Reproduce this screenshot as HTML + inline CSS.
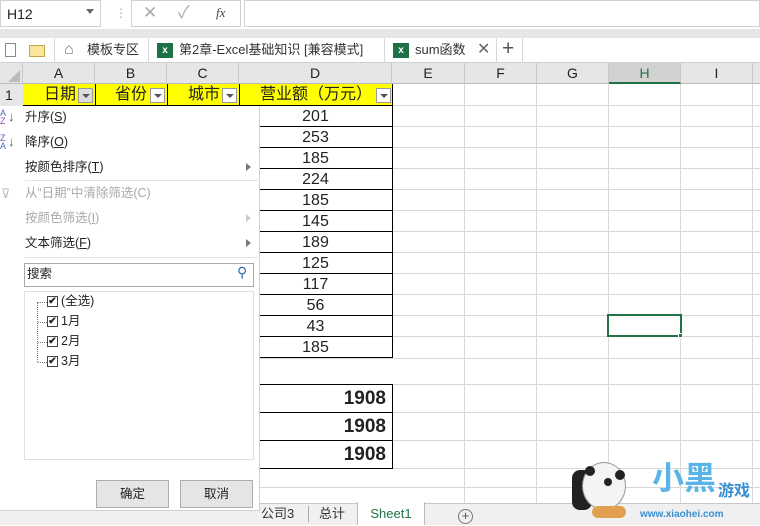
<!DOCTYPE html>
<html><head><meta charset="utf-8"><style>
*{box-sizing:border-box;margin:0;padding:0}
body{width:760px;height:525px;overflow:hidden;background:#fff;font-family:"Liberation Sans","Noto Sans CJK SC",sans-serif;font-size:13px;color:#222;position:relative;line-height:1.2}
.a{position:absolute}
.vl{position:absolute;width:1px;background:#d8d8d8}
.hl{position:absolute;height:1px;background:#d8d8d8}
.ch{position:absolute;top:63px;height:21px;text-align:center;font-size:14px;line-height:21px;border-right:1px solid #c8c8c8}
.num{position:absolute;left:239px;width:154px;height:21px;text-align:center;font-size:16px;line-height:21px;border-right:1px solid #000;border-bottom:1px solid #000}
.big{position:absolute;left:239px;width:154px;height:28px;text-align:right;padding-right:6px;font-size:19px;font-weight:bold;line-height:28px;border-right:1px solid #000;border-bottom:1px solid #000}
.dd{position:absolute;top:88px;width:15px;height:15px;background:#fff;border:1px solid #999}
.dd:after{content:"";position:absolute;left:3px;top:5px;border:4px solid transparent;border-top:4px solid #555}
.mi{position:absolute;left:25px;font-size:12.5px}
.arr{position:absolute;left:246px;border:4px solid transparent;border-left:5px solid #777}
.cb{position:absolute;left:47px;width:11px;height:11px;border:1px solid #444;font-size:10px;line-height:9px;text-align:center;font-weight:bold}
.hd{position:absolute;top:84px;height:22px;line-height:22px;font-size:16px}
</style></head><body>
<div class="a" style="left:0;top:0;width:760px;height:30px;background:#fff"></div>
<div class="a" style="left:0;top:0;width:101px;height:27px;border:1px solid #d0d0d0;font-size:14px;padding:5px 6px">H12</div>
<div class="a" style="left:86px;top:9px;border:4px solid transparent;border-top:5px solid #666"></div>
<div class="a" style="left:115px;top:6px;color:#aaa;font-size:12px">⋮</div>
<div class="a" style="left:131px;top:0;width:110px;height:27px;border:1px solid #d0d0d0"></div>
<div class="a" style="left:143px;top:3px;color:#aaa;font-size:17px">✕</div>
<div class="a" style="left:178px;top:3px;color:#aaa;font-size:17px">✓</div>
<div class="a" style="left:216px;top:5px;color:#444;font-size:13px;font-style:italic;font-family:'Liberation Serif',serif">fx</div>
<div class="a" style="left:244px;top:0;width:516px;height:27px;border:1px solid #d0d0d0"></div>
<div class="a" style="left:0;top:29px;width:760px;height:9px;background:#e6e6e6"></div>
<div class="a" style="left:0;top:38px;width:760px;height:25px;background:#fff;border-bottom:1px solid #d0d0d0"></div>
<div class="a" style="left:5px;top:43px;width:11px;height:14px;border:1px solid #888"></div>
<div class="a" style="left:29px;top:45px;width:16px;height:12px;border:1px solid #c9a54a;background:#fbe59a"></div>
<div class="vl" style="left:54px;top:38px;height:25px"></div>
<div class="a" style="left:64px;top:40px;font-size:16px;color:#777">⌂</div>
<div class="a" style="left:87px;top:42px;color:#333">模板专区</div>
<div class="vl" style="left:148px;top:38px;height:25px"></div>
<div class="a" style="left:157px;top:43px;width:16px;height:15px;background:#1e7145;color:#fff;font-size:10px;font-weight:bold;text-align:center;line-height:15px">x</div>
<div class="a" style="left:179px;top:42px;color:#333">第2章-Excel基础知识 [兼容模式]</div>
<div class="vl" style="left:384px;top:38px;height:25px"></div>
<div class="a" style="left:393px;top:43px;width:16px;height:15px;background:#1e7145;color:#fff;font-size:10px;font-weight:bold;text-align:center;line-height:15px">x</div>
<div class="a" style="left:415px;top:42px;color:#333">sum函数</div>
<div class="a" style="left:477px;top:40px;font-size:16px;color:#666">✕</div>
<div class="vl" style="left:496px;top:38px;height:25px"></div>
<div class="a" style="left:502px;top:36px;font-size:21px;color:#555">+</div>
<div class="vl" style="left:522px;top:38px;height:25px"></div>
<div class="a" style="left:0;top:63px;width:760px;height:21px;background:#e6e6e6;border-bottom:1px solid #bbb"></div>
<div class="a" style="left:8px;top:70px;border:6px solid transparent;border-right-color:#bbb;border-bottom-color:#bbb"></div>
<div class="ch" style="left:0;width:23px"></div>
<div class="ch" style="left:23px;width:72px">A</div>
<div class="ch" style="left:95px;width:72px">B</div>
<div class="ch" style="left:167px;width:72px">C</div>
<div class="ch" style="left:239px;width:153px">D</div>
<div class="ch" style="left:392px;width:73px">E</div>
<div class="ch" style="left:465px;width:72px">F</div>
<div class="ch" style="left:537px;width:72px">G</div>
<div class="ch" style="left:609px;width:72px;background:#d2d2d2;border-bottom:2px solid #217346;color:#217346">H</div>
<div class="ch" style="left:681px;width:72px">I</div>
<div class="vl" style="left:464px;top:84px;height:420px"></div>
<div class="vl" style="left:536px;top:84px;height:420px"></div>
<div class="vl" style="left:608px;top:84px;height:420px"></div>
<div class="vl" style="left:680px;top:84px;height:420px"></div>
<div class="vl" style="left:752px;top:84px;height:420px"></div>
<div class="hl" style="left:239px;top:105px;width:521px"></div>
<div class="hl" style="left:239px;top:126px;width:521px"></div>
<div class="hl" style="left:239px;top:147px;width:521px"></div>
<div class="hl" style="left:239px;top:168px;width:521px"></div>
<div class="hl" style="left:239px;top:189px;width:521px"></div>
<div class="hl" style="left:239px;top:210px;width:521px"></div>
<div class="hl" style="left:239px;top:231px;width:521px"></div>
<div class="hl" style="left:239px;top:252px;width:521px"></div>
<div class="hl" style="left:239px;top:273px;width:521px"></div>
<div class="hl" style="left:239px;top:294px;width:521px"></div>
<div class="hl" style="left:239px;top:315px;width:521px"></div>
<div class="hl" style="left:239px;top:336px;width:521px"></div>
<div class="hl" style="left:239px;top:358px;width:521px"></div>
<div class="hl" style="left:239px;top:384px;width:521px"></div>
<div class="hl" style="left:239px;top:412px;width:521px"></div>
<div class="hl" style="left:239px;top:440px;width:521px"></div>
<div class="hl" style="left:239px;top:468px;width:521px"></div>
<div class="hl" style="left:239px;top:487px;width:521px"></div>
<div class="a" style="left:0;top:84px;width:23px;height:22px;background:#e6e6e6;font-size:14px;line-height:22px;padding-left:5px">1</div>
<div class="a" style="left:23px;top:84px;width:370px;height:22px;background:#ffff00;border-bottom:1px solid #000;border-right:1px solid #000"></div>
<div class="vl" style="left:95px;top:84px;height:22px;background:#000"></div>
<div class="vl" style="left:167px;top:84px;height:22px;background:#000"></div>
<div class="vl" style="left:239px;top:84px;height:22px;background:#000"></div>
<div class="hd" style="left:44px">日期</div>
<div class="dd" style="left:78px;background:#ddd"></div>
<div class="hd" style="left:115px">省份</div>
<div class="dd" style="left:150px"></div>
<div class="hd" style="left:188px">城市</div>
<div class="dd" style="left:222px"></div>
<div class="hd" style="left:260px">营业额（万元）</div>
<div class="dd" style="left:376px"></div>
<div class="num" style="top:106px">201</div>
<div class="num" style="top:127px">253</div>
<div class="num" style="top:148px">185</div>
<div class="num" style="top:169px">224</div>
<div class="num" style="top:190px">185</div>
<div class="num" style="top:211px">145</div>
<div class="num" style="top:232px">189</div>
<div class="num" style="top:253px">125</div>
<div class="num" style="top:274px">117</div>
<div class="num" style="top:295px">56</div>
<div class="num" style="top:316px">43</div>
<div class="num" style="top:337px">185</div>
<div class="a" style="left:239px;top:384px;width:154px;height:1px;background:#000"></div>
<div class="big" style="top:385px">1908</div>
<div class="big" style="top:413px">1908</div>
<div class="big" style="top:441px">1908</div>
<div class="a" style="left:607px;top:314px;width:75px;height:23px;border:2px solid #217346"></div>
<div class="a" style="left:678px;top:333px;width:5px;height:5px;background:#217346;border:1px solid #fff"></div>
<div class="a" style="left:0;top:503px;width:760px;height:22px;background:#f0f0f0;border-top:1px solid #c8c8c8"></div>
<div class="a" style="left:261px;top:506px;font-size:13px;color:#333">公司3</div>
<div class="vl" style="left:308px;top:506px;height:16px;background:#aaa"></div>
<div class="a" style="left:319px;top:506px;font-size:13px;color:#333">总计</div>
<div class="a" style="left:357px;top:502px;width:68px;height:23px;background:#fff;border-left:1px solid #bbb;border-right:1px solid #bbb;text-align:center;color:#217346;line-height:24px">Sheet1</div>
<div class="a" style="left:458px;top:509px;width:15px;height:15px;border:1px solid #777;border-radius:50%;text-align:center;line-height:12px;color:#555">+</div>
<div class="a" style="left:572px;top:470px;width:20px;height:40px;background:#222;border-radius:8px"></div>
<div class="a" style="left:582px;top:462px;width:44px;height:48px;background:#f4f4f4;border-radius:50%;border:1px solid #999"></div>
<div class="a" style="left:585px;top:466px;width:10px;height:10px;background:#222;border-radius:50%"></div>
<div class="a" style="left:615px;top:470px;width:10px;height:10px;background:#222;border-radius:50%"></div>
<div class="a" style="left:604px;top:478px;width:8px;height:8px;background:#222;border-radius:50%"></div>
<div class="a" style="left:592px;top:506px;width:34px;height:12px;background:#e0a050;border-radius:6px"></div>
<div class="a" style="left:652px;top:462px;font-size:32px;font-weight:bold;color:#5ab4e8;line-height:1">小黑</div>
<div class="a" style="left:718px;top:484px;font-size:16px;font-weight:bold;color:#3a8fd0;line-height:1">游戏</div>
<div class="a" style="left:640px;top:510px;font-size:10px;font-weight:bold;color:#3a8fd0;line-height:1">www.xiaohei.com</div>
<div class="a" style="left:0;top:106px;width:260px;height:405px;background:#fff;border-right:1px solid #d0d0d0;border-bottom:1px solid #d0d0d0"></div>
<div class="a" style="left:0;top:109px;font-size:9px;line-height:8px;color:#4a6fb5">A<br><span style="color:#8a4fb5">Z</span></div>
<div class="a" style="left:8px;top:109px;font-size:13px;color:#555">↓</div>
<div class="mi" style="top:110px">升序(<u>S</u>)</div>
<div class="a" style="left:0;top:134px;font-size:9px;line-height:8px;color:#8a4fb5">Z<br><span style="color:#4a6fb5">A</span></div>
<div class="a" style="left:8px;top:134px;font-size:13px;color:#555">↓</div>
<div class="mi" style="top:135px">降序(<u>O</u>)</div>
<div class="mi" style="top:160px">按颜色排序(<u>T</u>)</div>
<div class="arr" style="top:163px"></div>
<div class="hl" style="left:25px;top:180px;width:235px;background:#e4e4e4"></div>
<div class="a" style="left:1px;top:186px;font-size:13px;color:#bbb">⊽</div>
<div class="mi" style="top:186px;color:#aaa">从“日期”中清除筛选(C)</div>
<div class="mi" style="top:211px;color:#aaa">按颜色筛选(<u>I</u>)</div>
<div class="arr" style="top:214px;border-left-color:#ccc"></div>
<div class="mi" style="top:236px">文本筛选(<u>F</u>)</div>
<div class="arr" style="top:239px"></div>
<div class="hl" style="left:25px;top:257px;width:235px;background:#e4e4e4"></div>
<div class="a" style="left:24px;top:263px;width:230px;height:24px;border:1px solid #aaa;padding:3px 2px;font-size:12.5px">搜索</div>
<div class="a" style="left:237px;top:264px;font-size:14px;color:#2b6cb0">⚲</div>
<div class="a" style="left:24px;top:291px;width:230px;height:169px;border:1px solid #e0e0e0"></div>
<div class="a" style="left:37px;top:302px;width:1px;height:60px;border-left:1px dotted #777"></div>
<div class="a" style="left:38px;top:302px;width:9px;border-top:1px dotted #777"></div>
<div class="a" style="left:38px;top:322px;width:9px;border-top:1px dotted #777"></div>
<div class="a" style="left:38px;top:342px;width:9px;border-top:1px dotted #777"></div>
<div class="a" style="left:38px;top:362px;width:9px;border-top:1px dotted #777"></div>
<div class="cb" style="top:296px">✔</div><div class="a" style="left:61px;top:294px;font-size:12.5px">(全选)</div>
<div class="cb" style="top:316px">✔</div><div class="a" style="left:61px;top:314px;font-size:12.5px">1月</div>
<div class="cb" style="top:336px">✔</div><div class="a" style="left:61px;top:334px;font-size:12.5px">2月</div>
<div class="cb" style="top:356px">✔</div><div class="a" style="left:61px;top:354px;font-size:12.5px">3月</div>
<div class="a" style="left:96px;top:480px;width:73px;height:28px;background:#e5e5e5;border:1px solid #adadad;text-align:center;line-height:26px;font-size:12.5px">确定</div>
<div class="a" style="left:180px;top:480px;width:73px;height:28px;background:#e5e5e5;border:1px solid #adadad;text-align:center;line-height:26px;font-size:12.5px">取消</div>
</body></html>
